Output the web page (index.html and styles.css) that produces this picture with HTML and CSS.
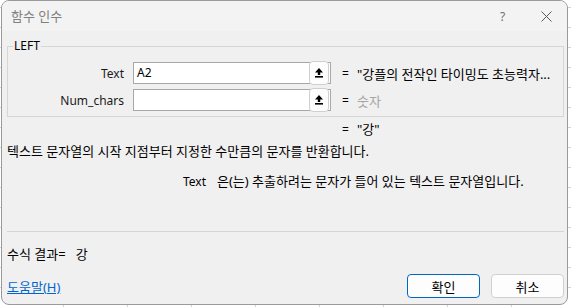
FILE: index.html
```html
<!DOCTYPE html>
<html lang="ko">
<head>
    <meta charset="UTF-8">
    <title>함수 인수</title>
    <link rel="stylesheet" href="styles.css">
</head>
<body>
    <div class="dialog">
        <div class="titlebar">
            <span class="title">함수 인수</span>
            <span class="help">?</span>
            <span class="close">
                <svg width="11" height="11" viewBox="0 0 11 11"><path d="M0.5 0.5 L10.5 10.5 M10.5 0.5 L0.5 10.5" stroke="#5a5a5a" stroke-width="1" fill="none"/></svg>
            </span>
        </div>

        <div class="dialog-body">
            <fieldset class="args">
                <legend>LEFT</legend>
                <div class="arg-grid">
                    <label class="arg-label">Text</label>
                    <div class="field">
                        <span class="field-value">A2</span>
                        <button class="collapse-btn">
                            <svg width="10" height="11" viewBox="0 0 10 11"><path d="M5 1 L9 5.5 H6.2 V8 H3.8 V5.5 H1 Z" fill="#000"/><rect x="1" y="9" width="8" height="1.6" fill="#000"/></svg>
                        </button>
                    </div>
                    <span class="eq">=</span>
                    <span class="arg-value">"강플의 전작인 타이밍도 초능력자...</span>

                    <label class="arg-label">Num_chars</label>
                    <div class="field">
                        <span class="field-value"></span>
                        <button class="collapse-btn">
                            <svg width="10" height="11" viewBox="0 0 10 11"><path d="M5 1 L9 5.5 H6.2 V8 H3.8 V5.5 H1 Z" fill="#000"/><rect x="1" y="9" width="8" height="1.6" fill="#000"/></svg>
                        </button>
                    </div>
                    <span class="eq">=</span>
                    <span class="arg-value hint">숫자</span>
                </div>
            </fieldset>

            <div class="func-result"><span class="eq-inline">=</span>"강"</div>
            <p class="desc">텍스트 문자열의 시작 지점부터 지정한 수만큼의 문자를 반환합니다.</p>
            <p class="arg-desc"><span class="arg-name">Text</span>은(는) 추출하려는 문자가 들어 있는 텍스트 문자열입니다.</p>

            <div class="separator"></div>

            <div class="formula-result">수식 결과=<span class="formula-value">강</span></div>

            <div class="footer">
                <a href="#" class="help-link">도움말(H)</a>
                <div class="buttons">
                    <button class="btn btn-default">확인</button>
                    <button class="btn">취소</button>
                </div>
            </div>
        </div>
    </div>
</body>
</html>
```

FILE: styles.css
```css
/* Base */
* {
    margin: 0;
    padding: 0;
    box-sizing: border-box;
}

body {
    font-family: 'Noto Sans', 'Noto Sans CJK KR', sans-serif;
    font-size: 13px;
    color: #000;
    background-color: #fff;
    background-image:
        repeating-linear-gradient(90deg, transparent 0 63px, #d4d4d4 63px 64px),
        repeating-linear-gradient(0deg, transparent 0 19px, #d4d4d4 19px 20px);
    width: 571px;
    height: 307px;
    overflow: hidden;
}

/* Dialog window */
.dialog {
    margin-left: 1px;
    width: 567px;
    height: 305px;
    background: #f0f0f0;
    border: 1px solid #9a9a9a;
    border-radius: 8px;
    overflow: hidden;
    display: flex;
    flex-direction: column;
}

.titlebar {
    height: 30px;
    flex-shrink: 0;
    background: #f3f3f3;
    display: flex;
    align-items: center;
    padding-left: 9px;
}

.title {
    color: #808080;
    line-height: 16px;
    flex: 1;
}

.help {
    color: #707070;
    font-size: 12px;
    width: 41px;
}

.close {
    display: flex;
    width: 25px;
    margin-right: 1px;
    padding-top: 1px;
}

.dialog-body {
    padding: 8px 3px 0 5px;
    flex: 1;
}

/* Argument group */
.args {
    border: 1px solid #d6d6d6;
    padding: 9px 6px 5px 6px;
    margin: 0;
}

.args legend {
    font-size: 12px;
    line-height: 14px;
    padding: 0 1px;
    margin-left: -1px;
}

.arg-grid {
    display: grid;
    grid-template-columns: 119px 198px 26px 1fr;
    grid-auto-rows: 22px;
    row-gap: 5px;
    align-items: center;
}

.arg-label {
    font-size: 12px;
    text-align: right;
    padding-right: 9px;
    color: #1a1a1a;
}

.field {
    height: 22px;
    background: #fff;
    border: 1px solid #a8a8a8;
    display: flex;
    align-items: center;
    padding-left: 3px;
}

.field-value {
    flex: 1;
    font-size: 12px;
    line-height: 16px;
}

.collapse-btn {
    width: 20px;
    height: 24px;
    margin: -2px 1px -2px 0;
    background: #fdfdfd;
    border: 1px solid #cfcfcf;
    border-radius: 4px;
    display: flex;
    align-items: center;
    justify-content: center;
    padding-bottom: 1px;
}

.eq {
    font-size: 12px;
    padding-left: 11px;
}

.arg-value {
    white-space: nowrap;
    overflow: hidden;
}

.hint {
    color: #a6a6a6;
}

/* Description area */
.func-result {
    margin-top: 4px;
    line-height: 16px;
    padding-left: 335px;
}

.eq-inline {
    display: inline-block;
    width: 15px;
    font-size: 12px;
}

.desc {
    margin-top: 5px;
    line-height: 16px;
}

.arg-desc {
    margin-top: 14px;
    line-height: 16px;
    padding-left: 176px;
}

.arg-name {
    display: inline-block;
    width: 34px;
    font-size: 12px;
}

.separator {
    margin-top: 41px;
    height: 1px;
    background: #d6d6d6;
}

.formula-result {
    margin-top: 14px;
    line-height: 16px;
}

.formula-value {
    margin-left: 10px;
}

/* Footer */
.footer {
    margin-top: 12px;
    display: flex;
    align-items: center;
    justify-content: space-between;
}

.help-link {
    color: #0066cc;
    text-decoration: underline;
    line-height: 16px;
    margin-top: 2px;
}

.buttons {
    display: flex;
    gap: 11px;
}

.btn {
    width: 73px;
    height: 24px;
    font-family: inherit;
    font-size: 13px;
    color: #000;
    background: #fdfdfd;
    border: 1px solid #d0d0d0;
    border-radius: 4px;
}

.btn-default {
    border-color: #0067c0;
}
```
